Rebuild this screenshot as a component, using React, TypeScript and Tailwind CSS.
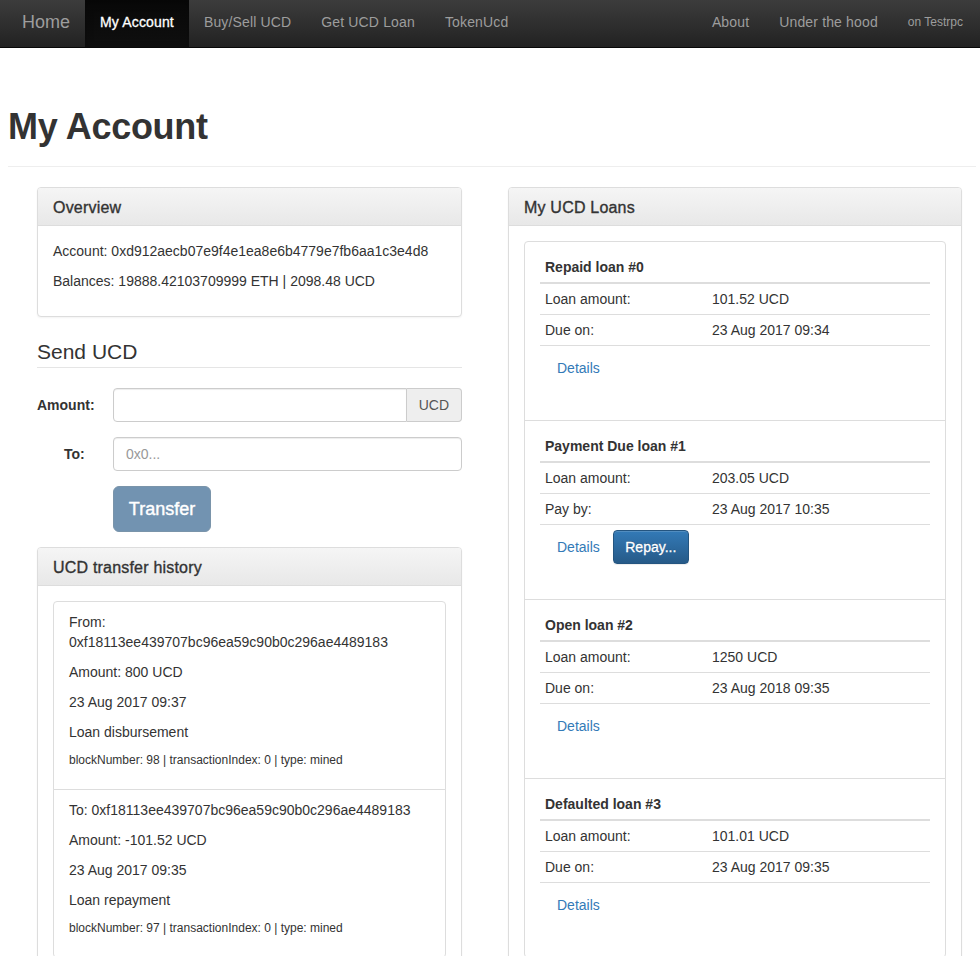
import React from "react";

function Panel({
  title,
  children,
  className = "",
}: {
  title: string;
  children: React.ReactNode;
  className?: string;
}) {
  return (
    <div
      className={
        "rounded-[4px] border border-[#ddd] bg-white shadow-[0_1px_2px_rgba(0,0,0,0.05)] " +
        className
      }
    >
      <div className="rounded-t-[3px] border-b border-[#ddd] bg-[linear-gradient(to_bottom,#f5f5f5_0,#e8e8e8_100%)] px-[15px] pb-[9px] pt-[11px] text-[16px] leading-[17px] tracking-[0.2px] text-[#333] [-webkit-text-stroke:0.35px_#333]">
        {title}
      </div>
      <div className="p-[15px]">{children}</div>
    </div>
  );
}

type Loan = {
  title: string;
  amount: string;
  dateLabel: string;
  date: string;
  repay?: boolean;
};

const loans: Loan[] = [
  { title: "Repaid loan #0", amount: "101.52 UCD", dateLabel: "Due on:", date: "23 Aug 2017 09:34" },
  { title: "Payment Due loan #1", amount: "203.05 UCD", dateLabel: "Pay by:", date: "23 Aug 2017 10:35", repay: true },
  { title: "Open loan #2", amount: "1250 UCD", dateLabel: "Due on:", date: "23 Aug 2018 09:35" },
  { title: "Defaulted loan #3", amount: "101.01 UCD", dateLabel: "Due on:", date: "23 Aug 2017 09:35" },
];

function LoanItem({ loan, first, last }: { loan: Loan; first: boolean; last: boolean }) {
  return (
    <div
      className={
        "-mb-px border border-[#ddd] bg-white px-[15px] pt-[10px] pb-[30px] " +
        (first ? "rounded-t-[4px] " : "") +
        (last ? "rounded-b-[4px]" : "")
      }
    >
      <div className="border-b-2 border-[#ddd] p-[5px] font-bold leading-[20px]">{loan.title}</div>
      <div className="flex border-b border-[#ddd]">
        <div className="w-[167px] p-[5px] leading-[20px]">Loan amount:</div>
        <div className="p-[5px] leading-[20px]">{loan.amount}</div>
      </div>
      <div className="flex border-b border-[#ddd]">
        <div className="w-[167px] p-[5px] leading-[20px]">{loan.dateLabel}</div>
        <div className="p-[5px] leading-[20px]">{loan.date}</div>
      </div>
      <div className="flex p-[5px] pl-[4px]">
        <button className="h-[34px] border border-transparent px-[12px] text-[14px] leading-[20px] text-[#337ab7]">
          Details
        </button>
        {loan.repay && (
          <button className="h-[34px] w-[76px] rounded-[4px] border border-[#245580] bg-[linear-gradient(to_bottom,#337ab7_0,#265a88_100%)] text-[14px] leading-[20px] text-white shadow-[inset_0_1px_0_rgba(255,255,255,0.15),0_1px_1px_rgba(0,0,0,0.075)] [text-shadow:0_-1px_0_rgba(0,0,0,0.2)] [-webkit-text-stroke:0.3px_#fff]">
            Repay...
          </button>
        )}
      </div>
    </div>
  );
}

function NavLink({ children, active = false }: { children: React.ReactNode; active?: boolean }) {
  return (
    <div
      className={
        "flex h-full items-center px-[15px] pb-[3px] text-[14px] tracking-[0.15px] " +
        (active
          ? "bg-[linear-gradient(to_bottom,#080808_0,#0f0f0f_100%)] text-white shadow-[inset_0_3px_9px_rgba(0,0,0,0.25)] [-webkit-text-stroke:0.3px_#fff] tracking-[0.3px]"
          : "text-[#9d9d9d]")
      }
    >
      {children}
    </div>
  );
}

export default function App() {
  return (
    <div className="min-h-screen bg-white font-['Liberation_Sans',Arial,sans-serif] text-[14px] leading-[20px] text-[#333]">
      {/* Navbar */}
      <nav className="flex h-[48px] items-stretch border-b border-[#080808] bg-[linear-gradient(to_bottom,#3c3c3c_0,#222_100%)] pl-[7px] pr-[2px]">
        <div className="flex items-center px-[15px] pb-[3px] text-[18px] text-[#9d9d9d]">Home</div>
        <NavLink active>My Account</NavLink>
        <NavLink>Buy/Sell UCD</NavLink>
        <NavLink>Get UCD Loan</NavLink>
        <NavLink>TokenUcd</NavLink>
        <div className="ml-auto flex items-stretch">
          <NavLink>About</NavLink>
          <NavLink>Under the hood</NavLink>
          <div className="flex h-full items-center px-[15px] pb-[3px] text-[12px] text-[#9d9d9d]">on Testrpc</div>
        </div>
      </nav>

      <div className="pl-[8px] pr-[4px]">
        <div className="mb-[20px] mt-[59px] border-b border-[#eee] pb-[9px]">
          <h1 className="mb-[10px] text-[36px] font-bold leading-[39.6px] tracking-[-0.3px]">My Account</h1>
        </div>

        <div className="flex items-start gap-[46px] pl-[29px]">
          {/* Left column */}
          <div className="w-[425px] shrink-0">
            <Panel title="Overview" className="mb-[20px]">
              <p className="mb-[10px]">Account: 0xd912aecb07e9f4e1ea8e6b4779e7fb6aa1c3e4d8</p>
              <p className="mb-[10px]">Balances: 19888.42103709999 ETH | 2098.48 UCD</p>
            </Panel>

            <div className="mb-[20px] border-b border-[#e5e5e5] text-[21px] leading-[30px]">Send UCD</div>

            <div className="mb-[15px] flex">
              <label className="w-[76px] shrink-0 pt-[7px] font-bold">Amount:</label>
              <div className="flex flex-1">
                <input
                  className="h-[34px] min-w-0 flex-1 rounded-l-[4px] border border-[#ccc] px-[12px] text-[14px] text-[#555] shadow-[inset_0_1px_1px_rgba(0,0,0,0.075)] outline-none"
                  type="text"
                />
                <span className="flex h-[34px] items-center rounded-r-[4px] border border-l-0 border-[#ccc] bg-[#eee] px-[12px] text-[14px] text-[#555]">
                  UCD
                </span>
              </div>
            </div>

            <div className="mb-[15px] flex">
              <label className="w-[76px] shrink-0 pl-[27px] pt-[7px] font-bold">To:</label>
              <input
                className="h-[34px] min-w-0 flex-1 rounded-[4px] border border-[#ccc] px-[12px] text-[14px] text-[#555] shadow-[inset_0_1px_1px_rgba(0,0,0,0.075)] outline-none placeholder:text-[#999]"
                type="text"
                placeholder="0x0..."
              />
            </div>

            <div className="mb-[15px] pl-[76px]">
              <button className="w-[98px] rounded-[6px] border border-[#7a94aa] bg-[#7293b1] py-[10px] text-[18px] leading-[24px] text-white [-webkit-text-stroke:0.4px_#fff]">
                Transfer
              </button>
            </div>

            <Panel title="UCD transfer history">
              <div>
                <div className="-mb-px rounded-t-[4px] border border-[#ddd] px-[15px] py-[10px]">
                  <p className="mb-[10px]">
                    From:
                    <br />
                    0xf18113ee439707bc96ea59c90b0c296ae4489183
                  </p>
                  <p className="mb-[10px]">Amount: 800 UCD</p>
                  <p className="mb-[10px]">23 Aug 2017 09:37</p>
                  <p className="mb-[10px]">Loan disbursement</p>
                  <p className="mb-[10px] text-[12px] leading-[17px]">
                    blockNumber: 98 | transactionIndex: 0 | type: mined
                  </p>
                </div>
                <div className="-mb-px rounded-b-[4px] border border-[#ddd] px-[15px] py-[10px]">
                  <p className="mb-[10px]">To: 0xf18113ee439707bc96ea59c90b0c296ae4489183</p>
                  <p className="mb-[10px]">Amount: -101.52 UCD</p>
                  <p className="mb-[10px]">23 Aug 2017 09:35</p>
                  <p className="mb-[10px]">Loan repayment</p>
                  <p className="mb-[10px] text-[12px] leading-[17px]">
                    blockNumber: 97 | transactionIndex: 0 | type: mined
                  </p>
                </div>
              </div>
            </Panel>
          </div>

          {/* Right column */}
          <div className="w-[454px] shrink-0">
            <Panel title="My UCD Loans">
              <div>
                {loans.map((l, i) => (
                  <LoanItem key={l.title} loan={l} first={i === 0} last={i === loans.length - 1} />
                ))}
              </div>
            </Panel>
          </div>
        </div>
      </div>
    </div>
  );
}
